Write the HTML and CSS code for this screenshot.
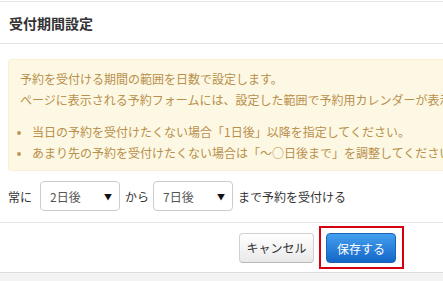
FILE: index.html
```html
<!DOCTYPE html>
<html lang="ja">
<head>
<meta charset="utf-8">
<link rel="stylesheet" href="styles.css">
</head>
<body>
<div class="modal">
  <div class="modal-header">
    <h3 class="title">受付期間設定</h3>
  </div>
  <div class="modal-body">
    <div class="alert">
      <p class="alert-text">予約を受付ける期間の範囲を日数で設定します。<br>ページに表示される予約フォームには、設定した範囲で予約用カレンダーが表示されます。</p>
      <ul class="alert-list">
        <li>当日の予約を受付けたくない場合「1日後」以降を指定してください。</li>
        <li>あまり先の予約を受付けたくない場合は「～○日後まで」を調整してください。</li>
      </ul>
    </div>
    <div class="form-row">
      <span class="label first">常に</span>
      <div class="select"><span>2日後</span><span class="caret">▼</span></div>
      <span class="label">から</span>
      <div class="select"><span>7日後</span><span class="caret">▼</span></div>
      <span class="label">まで予約を受付ける</span>
    </div>
  </div>
  <div class="modal-footer">
    <button class="btn btn-cancel">キャンセル</button>
    <span class="highlight"><button class="btn btn-primary">保存する</button></span>
  </div>
  <div class="modal-bottom"></div>
</div>
</body>
</html>
```

FILE: styles.css
```css
html, body {
  margin: 0;
  padding: 0;
  overflow: hidden;
  background: #fff;
}
body {
  font-family: "Noto Sans CJK JP", "Noto Sans", sans-serif;
  font-size: 12px;
  color: #333;
}
.modal {
  width: 443px;
  padding-top: 1px;
}
.modal-header {
  border-top: 1px solid #e3e3e3;
  border-bottom: 1px solid #e3e3e3;
  height: 41px;
  display: flex;
  align-items: center;
  padding-left: 9px;
}
.title {
  margin: 0;
  font-size: 14px;
  font-weight: bold;
  color: #333;
  line-height: 20px;
}
.modal-body {
  padding: 15px 0 11px 8px;
}
.alert {
  background: #fcf8e3;
  border: 1px solid #fbeed5;
  border-right: none;
  border-radius: 4px 0 0 4px;
  color: #b98f4c;
  padding: 8px 0 5px 11px;
  white-space: nowrap;
  overflow: hidden;
  height: 97px;
}
.alert-text {
  margin: 0;
  line-height: 21px;
}
.alert-list {
  margin: 11px 0 0;
  padding-left: 12px;
  line-height: 21px;
}
.alert-list li::marker {
  color: #c09853;
  font-size: 10px;
}
.form-row {
  display: flex;
  align-items: center;
  margin-top: 10px;
  height: 30px;
}
.label {
  margin: 0 4px 0 5px;
  white-space: nowrap;
}
.label.first {
  margin: 0 8px 0 0;
}
.select {
  height: 28px;
  border: 1px solid #ccc;
  border-radius: 4px;
  display: flex;
  align-items: center;
  justify-content: space-between;
  padding: 0 7px 0 9px;
  box-sizing: content-box;
  width: 62px;
  background: #fff;
  color: #555;
}
.caret {
  font-size: 8px;
  color: #111;
}
.modal-footer {
  border-top: 1px solid #e3e3e3;
  height: 49px;
  display: flex;
  align-items: center;
  justify-content: flex-end;
  padding-right: 39px;
}
.btn {
  font-family: inherit;
  font-size: 12px;
  height: 30px;
  border-radius: 4px;
  padding: 0 6px;
  white-space: nowrap;
  cursor: pointer;
}
.btn-cancel {
  background: linear-gradient(#ffffff, #e9e9e9);
  border: 1px solid #d0d0d0;
  border-bottom-color: #b8b8b8;
  color: #333;
  width: 75px;
  margin-right: 5px;
}
.highlight {
  display: inline-flex;
  border: 2px solid #d4000f;
  padding: 5px 6px 4px 5px;
}
.btn-primary {
  background: linear-gradient(#43a0ee, #1466c8);
  border: 1px solid #1c63b8;
  color: #fff;
  width: 70px;
}
.modal-bottom {
  border-top: 1px solid #dcdcdc;
  background: #f3f3f3;
  height: 10px;
}
```
